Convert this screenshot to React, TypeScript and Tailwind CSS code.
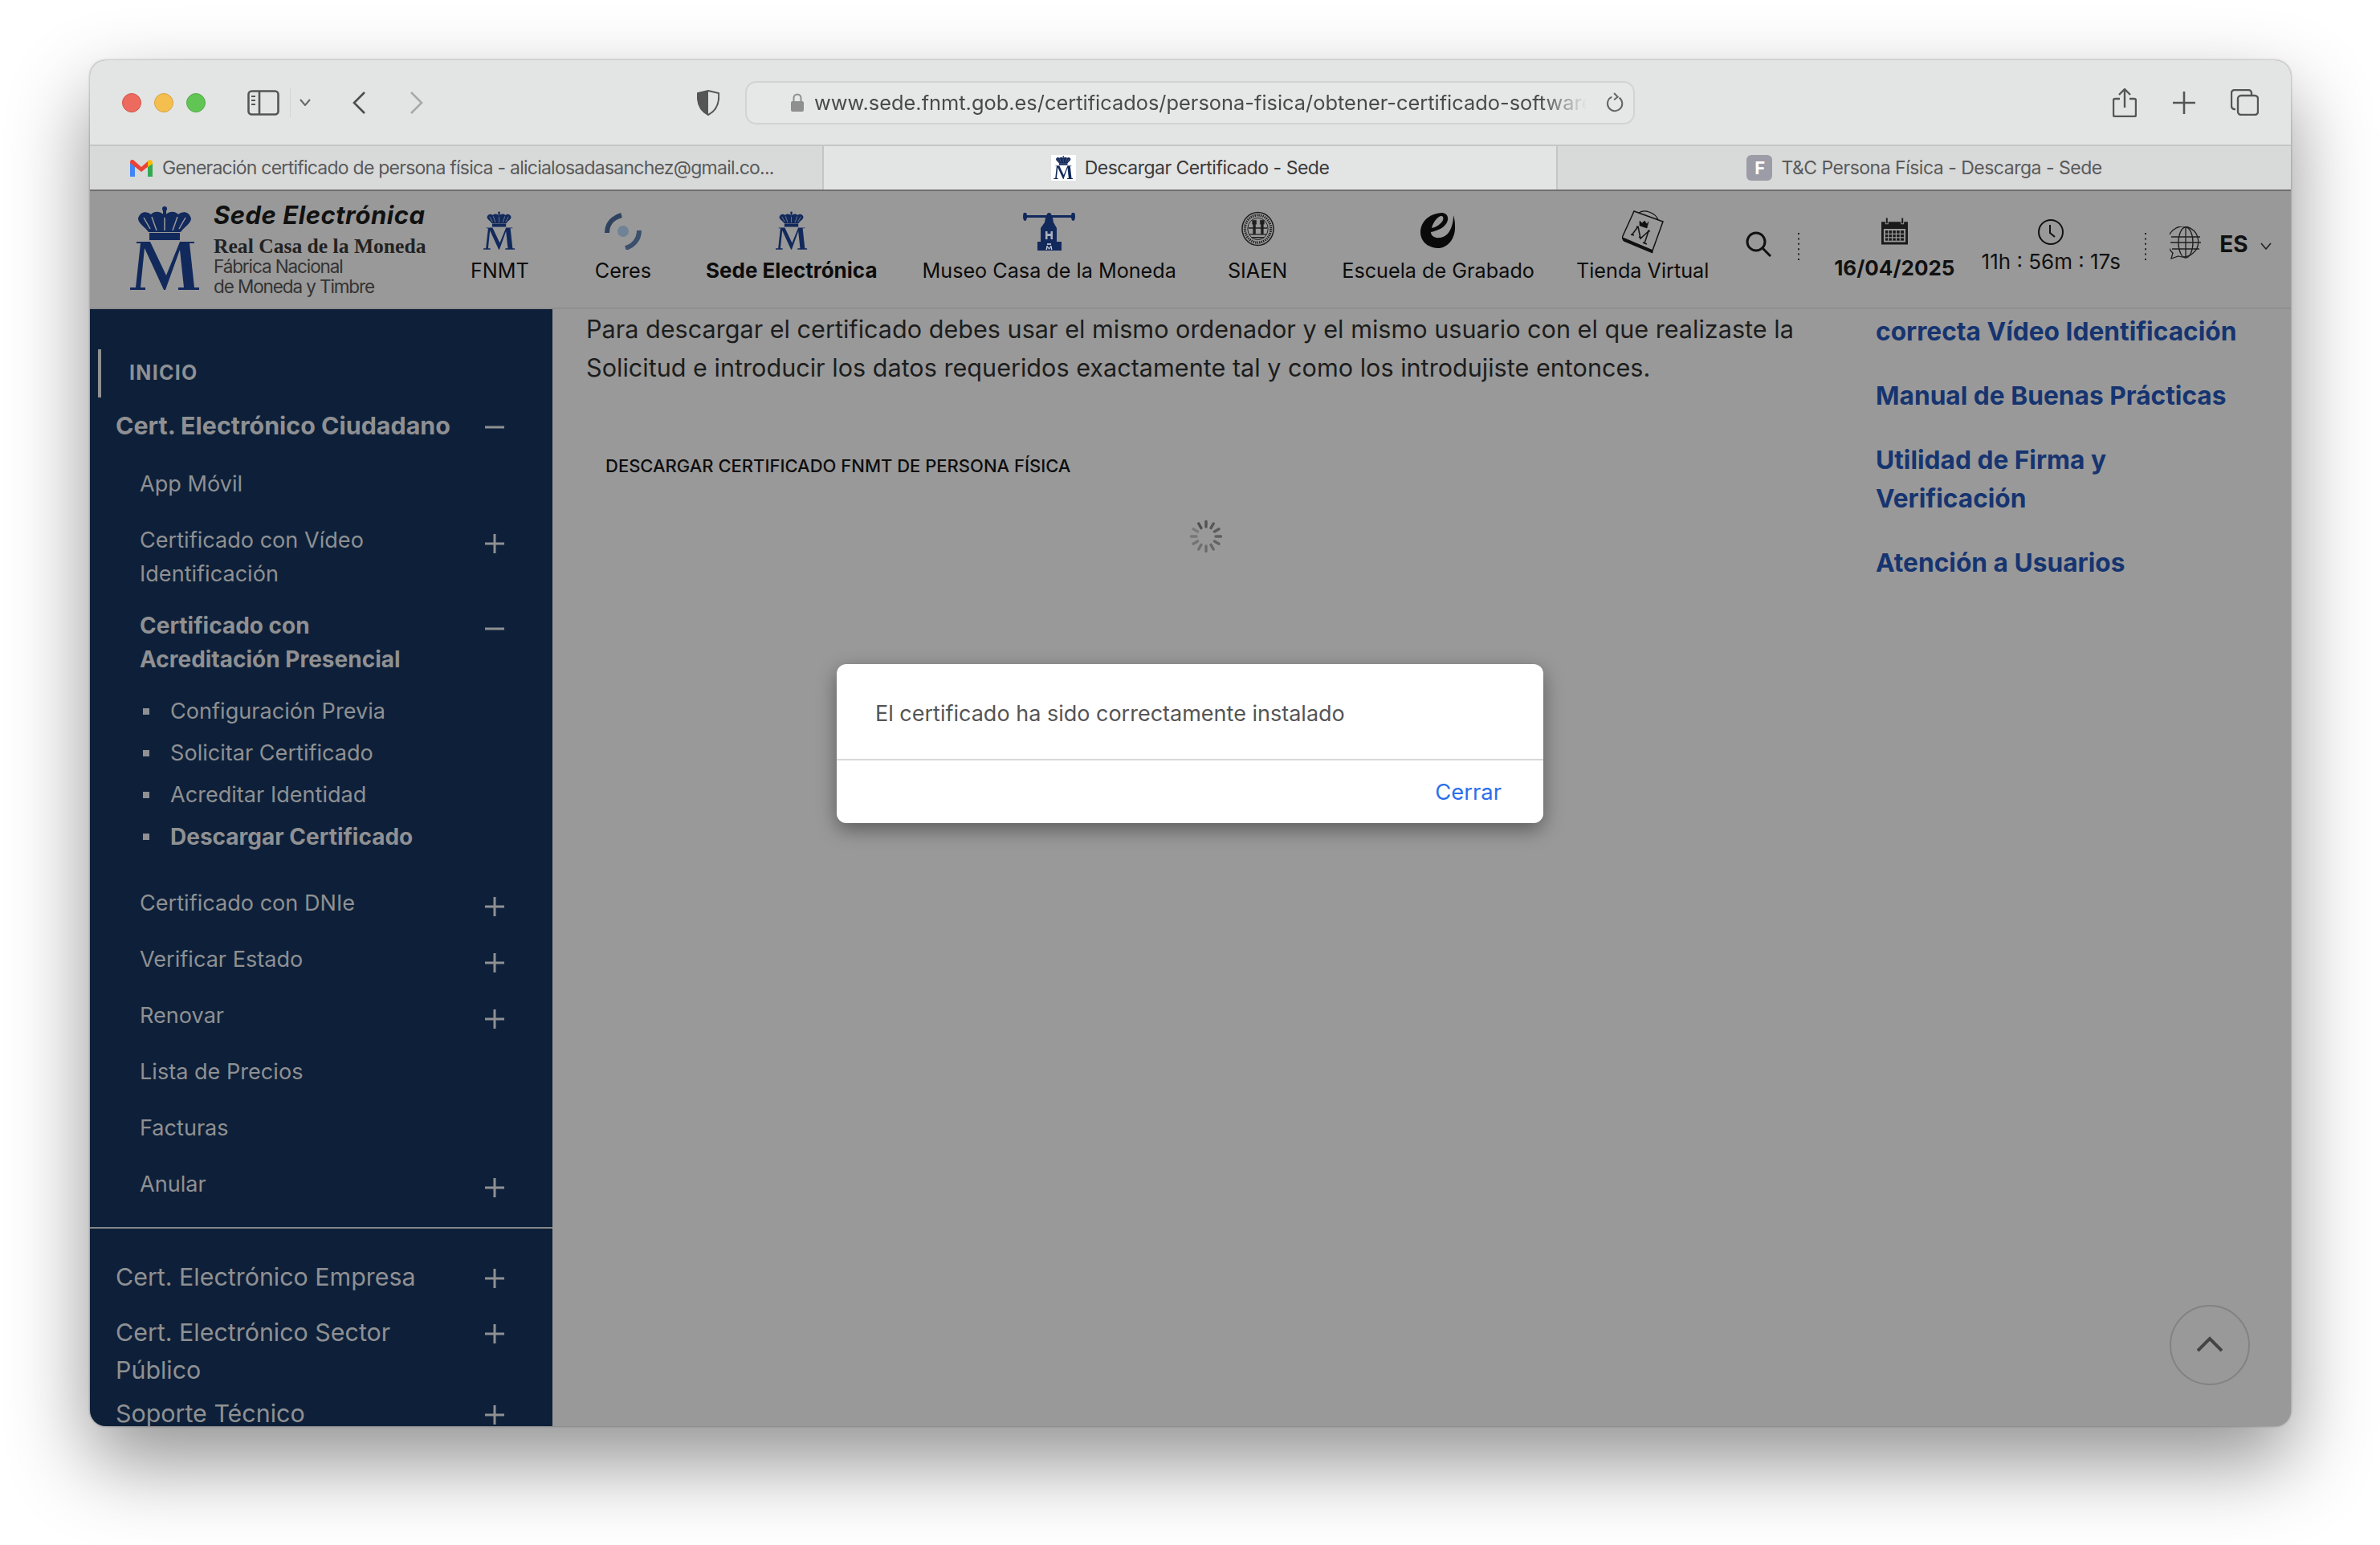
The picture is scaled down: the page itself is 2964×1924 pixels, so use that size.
import React from "react";

const navy = "#12295c";

function RoyalM({ className }: { className: string }) {
  return (
    <svg viewBox="0 0 88 108" className={className} fill={navy}>
      <circle cx="43" cy="3" r="3" />
      <rect x="41" y="5" width="4" height="6" />
      <path d="M10 15C12 7 20 5 26 10C31 5 37 6 43 11C49 6 55 5 60 10C66 5 74 7 76 15C76 21 68 25 63 32H23C18 25 10 21 10 15Z" />
      <path d="M27 13L33 30M43 14V30M59 13L53 30M17 14L25 28M69 14L61 28" stroke="#999" strokeWidth="1.5" fill="none" />
      <rect x="24" y="33" width="38" height="9" />
      <path d="M8 44H25L45 86L62 44H80V46H74L80 101H86V104H60V101H67L62 54L44 104H42L18 52L13 101H19V104H0V101H7L13 46H8Z" />
    </svg>
  );
}

function Ceres() {
  return (
    <svg viewBox="0 0 46 46" className="w-[46px] h-[46px]" fill="none">
      <path d="M21 3C10 6 3 14 3 25" stroke="#2f435f" strokeWidth="6" />
      <path d="M43 22C43 33 36 41 26 44" stroke="#3a506d" strokeWidth="6" />
      <circle cx="23" cy="23" r="7" fill="#6f8296" />
    </svg>
  );
}

function Press() {
  return (
    <svg viewBox="0 0 65 47" className="w-[65px] h-[47px]" fill={navy}>
      <rect x="2" y="3" width="61" height="3" />
      <ellipse cx="2.5" cy="4.5" rx="2.5" ry="5.5" />
      <ellipse cx="62.5" cy="4.5" rx="2.5" ry="5.5" />
      <ellipse cx="32.5" cy="3.5" rx="3" ry="3.5" />
      <path d="M28 6H37L38 12L42 19V36H48V47H18V36H22V19L27 12Z" />
      <path d="M28 23H30.5V26H34.5V23H37V33H34.5V29H30.5V33H28Z" fill="#aab0bd" />
      <path d="M30 38H35V40H30Z" fill="#aab0bd" />
      <path d="M28.5 46L29.5 41H30.5L32.5 44L34.5 41H35.5L36.5 46H35L34.5 43L32.5 46L30.5 43L30 46Z" fill="#c8ccd4" />
    </svg>
  );
}

function Seal() {
  return (
    <svg viewBox="0 0 42 44" className="w-[41px] h-[44px]" fill="none" stroke="#1f1f1f">
      <ellipse cx="21" cy="22" rx="20" ry="21" strokeWidth="1.6" />
      <ellipse cx="21" cy="22" rx="16.5" ry="17.5" strokeWidth="3.2" strokeDasharray="1.4 1.2" />
      <ellipse cx="21" cy="22" rx="13" ry="14" strokeWidth="1" />
      <path d="M14 11H19V16H18V29H15V16H14ZM24 11H29V16H28V29H25V16H24Z" fill="#1f1f1f" strokeWidth="0.5" />
      <path d="M9 21H33M10 29H32M13 33H29" strokeWidth="1.4" />
    </svg>
  );
}

function Escuela() {
  return (
    <svg viewBox="0 0 45 44" className="w-[45px] h-[44px]">
      <path
        fillRule="evenodd"
        d="M26 0C10 1 0 12 0 24C0 36 10 44 22 44C34 44 44 32 43 16C43 10 42 6 41 3C41 16 36 30 24 31C17 32 13 28 13 24C22 22 32 18 34 9C35 3 31 0 26 0ZM14 19C16 11 22 4 26 4C29 4 29 8 27 11C24 15 19 18 14 19Z"
        fill="#0a0a0a"
      />
    </svg>
  );
}

function Tienda() {
  return (
    <svg viewBox="0 0 52 54" className="w-[52px] h-[54px]" fill="none" stroke="#111">
      <path d="M15 1L51 14L38 50L0 34Z" strokeWidth="1.5" />
      <path d="M0 34L2 38L38 53L38 50Z" fill="#111" strokeWidth="1" />
      <path d="M21 3C28 -2 42 3 45 12" strokeWidth="1.2" />
      <path d="M22 13L25 16L28 13L31 17L33 14L31 22L22 19Z" fill="#111" strokeWidth="0.6" />
      <path d="M11 30L15 31M12 31L20 20M18 20L21 21M20 20L23 35L33 26M32 25L35 26M33 26L28 41M26 40L31 42M21 33L24 34" strokeWidth="1.5" />
    </svg>
  );
}

function Gmail() {
  return (
    <svg viewBox="0 0 28 21" className="w-[28px] h-[21px] shrink-0">
      <path d="M0 3V21H6V8Z" fill="#4285f4" />
      <path d="M22 8V21H28V3Z" fill="#34a853" />
      <path d="M0 3C0 0 3 -1 5 1L14 9L23 1L23 8L14 15L0 4Z" fill="#ea4335" />
      <path d="M22 2C24 -1 28 0 28 3V5L22 9Z" fill="#fbbc04" />
    </svg>
  );
}

function Plus() {
  return (
    <svg viewBox="0 0 24 24" className="w-[24px] h-[24px] shrink-0" stroke="#8f9093" strokeWidth="3" fill="none">
      <path d="M0 12H24M12 0V24" />
    </svg>
  );
}

function Minus() {
  return (
    <svg viewBox="0 0 24 24" className="w-[24px] h-[24px] shrink-0" stroke="#8f9093" strokeWidth="3" fill="none">
      <path d="M0 12H24" />
    </svg>
  );
}

function Spinner() {
  const ticks = Array.from({ length: 12 }, (_, i) => i);
  return (
    <svg viewBox="-20 -20 40 40" className="w-[40px] h-[40px]">
      {ticks.map((i) => (
        <line
          key={i}
          x1="0"
          y1="-18.5"
          x2="0"
          y2="-12"
          stroke="#4f4f4f"
          strokeWidth="3.4"
          strokeLinecap="round"
          opacity={1 - i * 0.055}
          transform={`rotate(${i * 30 - 30})`}
        />
      ))}
    </svg>
  );
}

function Dots() {
  return (
    <svg viewBox="0 0 2 34" className="w-[2px] h-[34px] shrink-0" fill="none" stroke="#222" strokeWidth="2" strokeDasharray="2 4.4">
      <path d="M1 0V34" />
    </svg>
  );
}

function NavItem({ label, bold, icon, cls }: { label: string; bold?: boolean; icon: React.ReactNode; cls: string }) {
  return (
    <div className={`flex flex-col items-center shrink-0 ${cls}`}>
      <div className="h-[58px] flex items-start justify-center">{icon}</div>
      <div className={`leading-[34px] text-[#0c0c0c] whitespace-nowrap ${bold ? "font-bold text-[26px]" : "text-[25.2px]"}`}>{label}</div>
    </div>
  );
}

function SubRow({ label, bold, icon, lines, mt = "mt-[28px]" }: { label: string; bold?: boolean; icon?: "plus" | "minus"; lines?: string[]; mt?: string }) {
  return (
    <div className={`flex items-start justify-between pl-[62px] pr-[60px] ${mt}`}>
      <div className={`leading-[42px] ${bold ? "font-bold text-[28px]" : "text-[27.1px]"}`}>
        {lines ? lines.map((l) => <div key={l}>{l}</div>) : label}
      </div>
      {icon === "plus" && <div className="mt-[13px]"><Plus /></div>}
      {icon === "minus" && <div className="mt-[13px]"><Minus /></div>}
    </div>
  );
}

function Bullet({ label, bold }: { label: string; bold?: boolean }) {
  return (
    <div className="h-[52px] flex items-center pl-[66px]">
      <div className="w-[8px] h-[8px] bg-[#8f9093] mr-[26px]" />
      <div className={bold ? "font-bold text-[28px]" : "text-[27.1px]"}>{label}</div>
    </div>
  );
}

function TopRow({ lines, icon = "plus", bold, cls }: { lines: string[]; icon?: "plus" | "minus"; bold?: boolean; cls: string }) {
  return (
    <div className={`flex items-start justify-between pl-[32px] pr-[60px] ${cls}`}>
      <div className={`text-[30.4px] leading-[47px] ${bold ? "font-bold" : ""}`}>
        {lines.map((l) => <div key={l}>{l}</div>)}
      </div>
      <div className="mt-[13px]">{icon === "plus" ? <Plus /> : <Minus />}</div>
    </div>
  );
}

export default function App() {
  return (
    <div className="w-[2964px] h-[1924px] bg-white pt-[75px] pl-[112px] overflow-hidden [font-family:Inter,sans-serif]">
      <div className="w-[2741px] h-[1701px] rounded-[20px] overflow-hidden flex flex-col shadow-[0_44px_100px_rgba(0,0,0,0.43),0_0_3px_rgba(0,0,0,0.4)] bg-[#999]">
        {/* toolbar */}
        <div className="h-[105px] shrink-0 bg-[#e3e4e4] flex items-center relative">
          <div className="flex gap-[16px] ml-[40px]">
            <div className="w-[24px] h-[24px] rounded-full bg-[#ec6a5e] border border-[#d2564b]" />
            <div className="w-[24px] h-[24px] rounded-full bg-[#f5bf4f] border border-[#d8a23d]" />
            <div className="w-[24px] h-[24px] rounded-full bg-[#61c554] border border-[#52a947]" />
          </div>
          <svg viewBox="0 0 40 32" className="w-[40px] h-[32px] ml-[52px]" fill="none" stroke="#555" strokeWidth="2.6">
            <rect x="1.5" y="1.5" width="37" height="29" rx="4" />
            <path d="M15 2V30" />
            <path d="M5 8H10M5 13H10M5 18H10" strokeWidth="2" />
          </svg>
          <div className="w-[1px] h-[36px] bg-[#d3d3d3] ml-[13px]" />
          <svg viewBox="0 0 14 9" className="w-[14px] h-[9px] ml-[11px]" fill="none" stroke="#666" strokeWidth="2">
            <path d="M1 1L7 8L13 1" />
          </svg>
          <svg viewBox="0 0 18 28" className="w-[18px] h-[28px] ml-[51px]" fill="none" stroke="#4d4d4d" strokeWidth="2.6">
            <path d="M16 1L3 14L16 27" />
          </svg>
          <svg viewBox="0 0 18 28" className="w-[18px] h-[28px] ml-[54px]" fill="none" stroke="#a9a9a9" strokeWidth="2.6">
            <path d="M2 1L15 14L2 27" />
          </svg>
          <svg viewBox="0 0 28 32" className="w-[28px] h-[32px] ml-[340px]">
            <path d="M14 1L27 4C28 16 24 26 14 31C4 26 0 16 1 4Z" fill="#e3e4e4" stroke="#555" strokeWidth="2" />
            <path d="M14 1L1 4C0 16 4 26 14 31Z" fill="#555" />
          </svg>
          <div className="ml-[32px] w-[1108px] h-[54px] rounded-[14px] border-[2px] border-[#d2d3d3] bg-[#e6e7e7] flex items-center relative overflow-hidden">
            <svg viewBox="0 0 16 23" className="w-[16px] h-[23px] ml-[55px] shrink-0">
              <path d="M3.5 10V6a4.5 4.5 0 019 0v4" fill="none" stroke="#8f8f8f" strokeWidth="2" />
              <rect x="0" y="10" width="16" height="13" rx="2" fill="#8f8f8f" />
            </svg>
            <div className="ml-[13px] pt-[2px] text-[25.4px] text-[#4a4a4a] whitespace-nowrap w-[962px] shrink-0 overflow-hidden [mask-image:linear-gradient(to_right,black_94%,transparent)]">
              www.sede.fnmt.gob.es/certificados/persona-fisica/obtener-certificado-software
            </div>
            <svg viewBox="0 0 24 28" className="w-[22px] h-[26px] ml-[24px] shrink-0" fill="none" stroke="#666" strokeWidth="2.2">
              <path d="M8 6A10 10 0 1018 7" />
              <path d="M11 1L16 6L11 10" />
            </svg>
          </div>
          <svg viewBox="0 0 30 36" className="w-[30px] h-[36px] ml-[595px]" fill="none" stroke="#555" strokeWidth="2.4">
            <path d="M9 13H3A2 2 0 001 15V33A2 2 0 003 35H27A2 2 0 0029 33V15A2 2 0 0027 13H21" />
            <path d="M15 24V2M8 8L15 1L22 8" />
          </svg>
          <svg viewBox="0 0 28 28" className="w-[28px] h-[28px] ml-[45px]" fill="none" stroke="#555" strokeWidth="2.6">
            <path d="M0 14H28M14 0V28" />
          </svg>
          <svg viewBox="0 0 35 33" className="w-[35px] h-[33px] ml-[44px]" fill="none" stroke="#555" strokeWidth="2.4">
            <path d="M6 25H5A4 4 0 011 21V5A4 4 0 015 1H22A4 4 0 0126 5V7" />
            <rect x="9" y="8" width="25" height="24" rx="4" />
          </svg>
        </div>

        {/* tabs */}
        <div className="h-[58px] shrink-0 flex text-[23px] tracking-[-0.5px] border-t-[2px] border-b-[2px] border-t-[#c4c5c5] border-b-[#707070]">
          <div className="w-[914px] bg-[#d8d9d9] flex items-center pl-[50px] border-r-[2px] border-[#c4c5c5] text-[#5a5a5a]">
            <Gmail />
            <span className="ml-[12px] whitespace-nowrap tracking-[-0.76px]">Generación certificado de persona física - alicialosadasanchez@gmail.co...</span>
          </div>
          <div className="w-[912px] bg-[#e3e4e4] flex items-center justify-center text-[#3a3a3a]">
            <div className="w-[31px] h-[32px] bg-white flex items-center justify-center mr-[11px] shrink-0">
              <RoyalM className="w-[25px] h-[30px]" />
            </div>
            <span className="whitespace-nowrap">Descargar Certificado - Sede</span>
          </div>
          <div className="flex-1 bg-[#d8d9d9] border-l-[2px] border-[#c4c5c5] flex items-center justify-center text-[#5a5a5a]">
            <div className="w-[32px] h-[32px] rounded-[6px] bg-[#9c9ca6] text-white font-bold text-[22px] flex items-center justify-center mr-[11px] shrink-0">F</div>
            <span className="whitespace-nowrap">T&amp;C Persona Física - Descarga - Sede</span>
          </div>
        </div>

        {/* site header */}
        <div className="h-[147px] shrink-0 bg-[#999] border-b-[2px] border-[#8f8f8f] flex items-start">
          <div className="w-[474px] shrink-0 flex pl-[50px] pt-[19px]">
            <RoyalM className="w-[88px] h-[108px] shrink-0" />
            <div className="ml-[16px] -mt-[5px]">
              <div className="text-[31px] leading-[32px] font-bold italic text-[#111] whitespace-nowrap tracking-[0.5px]">Sede Electrónica</div>
              <div className="mt-[10px] text-[25.6px] leading-[25px] font-bold text-[#222] [font-family:'Liberation_Serif',serif] whitespace-nowrap">Real Casa de la Moneda</div>
              <div className="text-[22.5px] leading-[25px] tracking-[-1.1px] text-[#333] whitespace-nowrap">Fábrica Nacional</div>
              <div className="text-[22.5px] leading-[25px] tracking-[-1.1px] text-[#333] whitespace-nowrap">de Moneda y Timbre</div>
            </div>
          </div>
          <div className="flex pt-[24px] shrink-0">
            <NavItem cls="" label="FNMT" icon={<RoyalM className="w-[40px] h-[52px]" />} />
            <NavItem cls="ml-[82px]" label="Ceres" icon={<div className="mt-[3px]"><Ceres /></div>} />
            <NavItem cls="ml-[68px]" label="Sede Electrónica" bold icon={<RoyalM className="w-[40px] h-[52px]" />} />
            <NavItem cls="ml-[56px]" label="Museo Casa de la Moneda" icon={<div className="mt-[3px]"><Press /></div>} />
            <NavItem cls="ml-[64px]" label="SIAEN" icon={<div className="mt-[1px]"><Seal /></div>} />
            <NavItem cls="ml-[68px]" label="Escuela de Grabado" icon={<div className="mt-[3px]"><Escuela /></div>} />
            <NavItem cls="ml-[52px]" label="Tienda Virtual" icon={<Tienda />} />
          </div>
          <svg viewBox="0 0 32 32" className="w-[32px] h-[32px] ml-[46px] mt-[50px] shrink-0" fill="none" stroke="#111" strokeWidth="3">
            <circle cx="13" cy="13" r="11" />
            <path d="M21 21L31 31" />
          </svg>
          <div className="ml-[33px] mt-[52px]"><Dots /></div>
          <div className="ml-[44px] mt-[33px] w-[148px] flex flex-col items-center shrink-0">
            <svg viewBox="0 0 34 34" className="w-[33px] h-[34px]" fill="#1a1a1a">
              <path d="M0 5H5V8H9V5H25V8H29V5H34V34H0ZM3 14V31H31V14Z" fillRule="evenodd" />
              <rect x="6" y="0" width="2" height="7" />
              <rect x="26" y="0" width="2" height="7" />
              <path d="M5 16H29V29H5Z" fill="#1a1a1a" />
              <path d="M9 16V29M14 16V29M19 16V29M24 16V29M5 20.5H29M5 25H29" stroke="#999" strokeWidth="1.3" />
            </svg>
            <div className="mt-[11px] text-[26px] leading-[36px] font-bold text-[#111] whitespace-nowrap">16/04/2025</div>
          </div>
          <div className="ml-[34px] mt-[35px] w-[174px] flex flex-col items-center shrink-0">
            <svg viewBox="0 0 32 32" className="w-[32px] h-[32px]" fill="none" stroke="#111" strokeWidth="2">
              <circle cx="16" cy="16" r="15" />
              <path d="M15 7V17L21 22" />
            </svg>
            <div className="mt-[4px] text-[26px] leading-[34px] text-[#111] whitespace-nowrap">11h : 56m : 17s</div>
          </div>
          <div className="ml-[30px] mt-[52px]"><Dots /></div>
          <svg viewBox="0 0 40 41" className="w-[40px] h-[41px] ml-[29px] mt-[44px] shrink-0" fill="none" stroke="#1f1f1f" strokeWidth="1.3">
            <path d="M4 33L2 40L11 37A19 19 0 104 33Z" />
            <ellipse cx="20" cy="20" rx="9" ry="19" />
            <path d="M20 1V39M2 13H38M1 20H39M3 28H37" />
          </svg>
          <div className="ml-[22px] mt-[48px] text-[28px] leading-[36px] font-bold text-[#111] shrink-0">ES</div>
          <svg viewBox="0 0 14 9" className="w-[14px] h-[9px] ml-[15px] mt-[64px] shrink-0" fill="none" stroke="#222" strokeWidth="1.6">
            <path d="M1 1L7 8L13 1" />
          </svg>
        </div>

        {/* body */}
        <div className="flex-1 flex min-h-0 relative">
          <div className="w-[576px] shrink-0 bg-[#0e2039] text-[#8f9093] overflow-hidden">
            <div className="mt-[50px] ml-[10px] h-[60px] border-l-[4px] border-[#8f9093] pl-[35px] flex items-center text-[25px] font-bold tracking-[1.3px]">
              INICIO
            </div>
            <TopRow lines={["Cert. Electrónico Ciudadano"]} bold icon="minus" cls="mt-[12px]" />
            <SubRow label="App Móvil" />
            <SubRow label="" lines={["Certificado con Vídeo", "Identificación"]} icon="plus" />
            <SubRow label="" lines={["Certificado con", "Acreditación Presencial"]} icon="minus" bold mt="mt-[22px]" />
            <div className="mt-[18px]">
              <Bullet label="Configuración Previa" />
              <Bullet label="Solicitar Certificado" />
              <Bullet label="Acreditar Identidad" />
              <Bullet label="Descargar Certificado" bold />
            </div>
            <div>
              <SubRow label="Certificado con DNIe" icon="plus" mt="mt-[36px]" />
              <SubRow label="Verificar Estado" icon="plus" />
              <SubRow label="Renovar" icon="plus" />
              <SubRow label="Lista de Precios" />
              <SubRow label="Facturas" />
              <SubRow label="Anular" icon="plus" />
            </div>
            <div className="h-[2px] bg-[#85878a] mt-[32px]" />
            <TopRow lines={["Cert. Electrónico Empresa"]} cls="mt-[37px]" />
            <TopRow lines={["Cert. Electrónico Sector", "Público"]} cls="mt-[22px]" />
            <TopRow lines={["Soporte Técnico"]} cls="mt-[7px]" />
          </div>

          <div className="flex-1 flex bg-[#999] min-w-0">
            <div className="w-[1648px] shrink-0 pl-[42px]">
              <p className="w-[1540px] text-[30.6px] leading-[48px] text-[#1d1d1d] mt-[1px]">
                Para descargar el certificado debes usar el mismo ordenador y el mismo usuario con el que realizaste la Solicitud e introducir los datos requeridos exactamente tal y como los introdujiste entonces.
              </p>
              <div className="mt-[82px] ml-[24px] text-[22px] leading-[32px] font-medium text-[#0d0d0d]">
                DESCARGAR CERTIFICADO FNMT DE PERSONA FÍSICA
              </div>
              <div className="mt-[52px] ml-[752px]">
                <Spinner />
              </div>
            </div>
            <div className="pt-[4px] text-[31.7px] leading-[48px] font-bold text-[#163470]">
              <div>correcta Vídeo Identificación</div>
              <div className="mt-[32px]">Manual de Buenas Prácticas</div>
              <div className="mt-[32px] w-[400px]">Utilidad de Firma y Verificación</div>
              <div className="mt-[32px]">Atención a Usuarios</div>
            </div>
          </div>

          {/* dialog over content */}
          <div className="absolute left-[930px] top-[442px] w-[880px] h-[198px] rounded-[12px] bg-white shadow-[0_8px_24px_rgba(0,0,0,0.4)] flex flex-col">
            <div className="h-[118px] shrink-0 flex items-center pl-[48px] pt-[6px] text-[27px] text-[#555]">
              El certificado ha sido correctamente instalado
            </div>
            <div className="h-[2px] bg-[#d8d8d8]" />
            <div className="flex-1 flex items-center justify-end pr-[52px] pt-[2px] text-[27.4px] text-[#2b6fea]">Cerrar</div>
          </div>

          {/* back to top */}
          <div className="absolute left-[2590px] top-[1240px] w-[100px] h-[100px] rounded-full border-[2px] border-[#828282] flex items-center justify-center">
            <svg viewBox="0 0 32 20" className="w-[32px] h-[20px] mb-[2px]" fill="none" stroke="#444" strokeWidth="4">
              <path d="M1 18L16 3L31 18" />
            </svg>
          </div>
        </div>
      </div>
    </div>
  );
}
